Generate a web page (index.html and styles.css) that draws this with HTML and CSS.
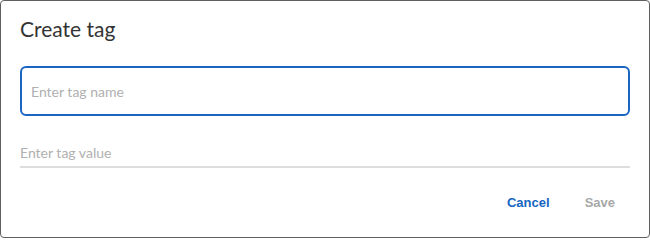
FILE: index.html
```html
<!DOCTYPE html>
<html>
<head>
<meta charset="utf-8">
<link rel="stylesheet" href="styles.css">
</head>
<body>
<div class="dialog">
  <h1 class="title">Create tag</h1>
  <div class="field-outlined">
    <input class="input" type="text" placeholder="Enter tag name">
  </div>
  <div class="field-underlined">
    <input class="input" type="text" placeholder="Enter tag value">
  </div>
  <div class="actions">
    <button class="btn btn-primary">Cancel</button>
    <button class="btn btn-disabled">Save</button>
  </div>
</div>
</body>
</html>
```
FILE: styles.css
```css
html, body {
  margin: 0;
  padding: 0;
  background: #ffffff;
}
.dialog {
  box-sizing: border-box;
  width: 650px;
  height: 238px;
  border: 1px solid #5f5f5f;
  border-radius: 4px;
  padding: 14px 19px 0 19px;
  display: flex;
  flex-direction: column;
  font-family: Lato, "Liberation Sans", sans-serif;
}
.title {
  margin: 0;
  font-size: 21px;
  line-height: 28px;
  font-weight: 400;
  color: #333333;
}
.field-outlined {
  box-sizing: border-box;
  margin-top: 23px;
  height: 50px;
  border: 2px solid #1a66c2;
  border-radius: 6px;
  display: flex;
  align-items: center;
  padding: 0 9px;
}
.field-underlined {
  box-sizing: border-box;
  margin-top: 25px;
  height: 27px;
  border-bottom: 2px solid #dddddd;
  display: flex;
  align-items: center;
  padding-bottom: 2px;
}
.input {
  border: none;
  outline: none;
  padding: 0;
  margin: 0;
  width: 100%;
  background: transparent;
  font-family: Lato, "Liberation Sans", sans-serif;
  font-size: 14px;
  color: #333333;
}
.input::placeholder {
  color: #b0b0b0;
}
.actions {
  display: flex;
  justify-content: flex-end;
  gap: 19px;
  margin-top: 21px;
  padding-right: 7px;
}
.btn {
  border: none;
  background: transparent;
  padding: 6px 8px;
  font-family: "Liberation Sans", Arial, sans-serif;
  font-weight: 700;
  font-size: 13px;
  line-height: 16px;
  cursor: pointer;
}
.btn-primary {
  color: #1565c0;
}
.btn-disabled {
  color: #a8a8a8;
}
```
